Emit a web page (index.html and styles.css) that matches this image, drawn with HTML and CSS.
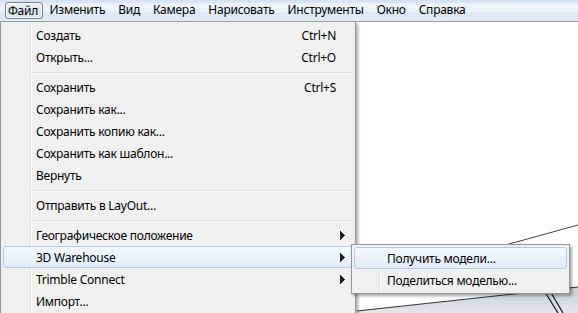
FILE: index.html
```html
<!DOCTYPE html>
<html lang="ru">
  <head>
    <meta charset="UTF-8" />
    <meta name="viewport" content="width=device-width, initial-scale=1.0" />
    <title>Файл</title>
    <link rel="stylesheet" href="styles.css">
  </head>
  <body>
    <div class="app">
      <!-- Menu bar -->
      <nav class="menubar">
        <span class="menubar-item active">Файл</span>
        <span class="menubar-item">Изменить</span>
        <span class="menubar-item">Вид</span>
        <span class="menubar-item">Камера</span>
        <span class="menubar-item">Нарисовать</span>
        <span class="menubar-item">Инструменты</span>
        <span class="menubar-item">Окно</span>
        <span class="menubar-item">Справка</span>
      </nav>

      <div class="viewport">
        <!-- Model canvas behind the menus -->
        <svg class="scene" width="578" height="291" viewBox="0 0 578 291">
          <defs>
            <linearGradient id="ground" x1="0" y1="0" x2="0" y2="1">
              <stop offset="0" stop-color="#c9cdd2" />
              <stop offset="1" stop-color="#e4e6e9" />
            </linearGradient>
          </defs>
          <polygon points="357,289 578,265 578,291 357,291" fill="url(#ground)" />
          <line x1="357" y1="289" x2="578" y2="265" stroke="#333" stroke-width="1" />
          <line x1="480" y1="230" x2="578" y2="203" stroke="#444" stroke-width="1" />
          <line x1="545" y1="270" x2="558" y2="291" stroke="#111" stroke-width="1.2" />
          <line x1="550" y1="269" x2="563" y2="291" stroke="#111" stroke-width="1.2" />
        </svg>

        <!-- File menu -->
        <div class="dropdown">
          <div class="item"><span class="label">Создать</span><span class="key">Ctrl+N</span><span class="arrow-cell"></span></div>
          <div class="item"><span class="label">Открыть...</span><span class="key">Ctrl+O</span><span class="arrow-cell"></span></div>
          <div class="separator"></div>
          <div class="item"><span class="label">Сохранить</span><span class="key">Ctrl+S</span><span class="arrow-cell"></span></div>
          <div class="item"><span class="label">Сохранить как...</span><span class="arrow-cell"></span></div>
          <div class="item"><span class="label">Сохранить копию как...</span><span class="arrow-cell"></span></div>
          <div class="item"><span class="label">Сохранить как шаблон...</span><span class="arrow-cell"></span></div>
          <div class="item"><span class="label">Вернуть</span><span class="arrow-cell"></span></div>
          <div class="separator"></div>
          <div class="item"><span class="label">Отправить в LayOut...</span><span class="arrow-cell"></span></div>
          <div class="separator"></div>
          <div class="item">
            <span class="label">Географическое положение</span>
            <span class="arrow-cell"><svg class="arrow" width="5" height="9" viewBox="0 0 5 9"><polygon points="0,0 5,4.5 0,9" /></svg></span>
          </div>
          <div class="item hover">
            <span class="label">3D Warehouse</span>
            <span class="arrow-cell"><svg class="arrow" width="5" height="9" viewBox="0 0 5 9"><polygon points="0,0 5,4.5 0,9" /></svg></span>
          </div>
          <div class="item">
            <span class="label">Trimble Connect</span>
            <span class="arrow-cell"><svg class="arrow" width="5" height="9" viewBox="0 0 5 9"><polygon points="0,0 5,4.5 0,9" /></svg></span>
          </div>
          <div class="item"><span class="label">Импорт...</span><span class="arrow-cell"></span></div>
        </div>

        <!-- 3D Warehouse submenu -->
        <div class="submenu">
          <div class="item hover"><span class="label">Получить модели...</span></div>
          <div class="item"><span class="label">Поделиться моделью...</span></div>
        </div>
      </div>
    </div>
  </body>
</html>
```

FILE: styles.css
```css
* {
  box-sizing: border-box;
  margin: 0;
  padding: 0;
}
body {
  width: 578px;
  height: 313px;
  overflow: hidden;
  background: #fff;
  font-family: "Noto Sans", "Liberation Sans", sans-serif;
  font-size: 12px;
  letter-spacing: -0.25px;
  color: #000;
}
.app {
  display: flex;
  flex-direction: column;
  height: 313px;
}
.menubar {
  display: flex;
  align-items: center;
  height: 22px;
  padding-left: 5px;
  background: linear-gradient(#d3dff0 0, #dfe8f4 3px, #eef3fa 4px, #eaf0f8 12px, #dee6f1 13px, #e4eaf3 20px);
  border-bottom: 1px solid #a0a0a0;
}
.menubar-item {
  height: 17px;
  line-height: 15px;
  padding: 0 6.5px;
  white-space: nowrap;
}
.menubar-item.active {
  padding: 0 4px 0 2px;
  border: 1px solid #7c7f84;
  border-radius: 3px;
  background: linear-gradient(#eceff3, #dde2e9);
  box-shadow: inset 0 0 0 1px rgba(255, 255, 255, 0.6);
}
.viewport {
  position: relative;
  flex: 1;
}
.scene {
  display: block;
}
.dropdown {
  position: absolute;
  left: 0;
  top: 0;
  width: 356px;
  padding: 2px;
  border: 1px solid #979797;
  border-top: none;
  background: linear-gradient(to right, #f0f0f0 29px, #e2e3e3 29px, #e2e3e3 30px, #fff 30px, #fff 31px, #f0f0f0 31px);
  box-shadow: 2px 2px 3px rgba(0, 0, 0, 0.35);
}
.item {
  display: flex;
  align-items: center;
  height: 22px;
  padding-left: 32px;
  border: 1px solid transparent;
  border-radius: 3px;
  white-space: nowrap;
}
.item.hover {
  border-color: #aecbf0;
  background: linear-gradient(#f4f7fc, #e3ebf7);
}
.label {
  flex: 1;
}
.key {
  text-align: right;
}
.arrow-cell {
  display: flex;
  align-items: center;
  width: 16px;
  padding-left: 4px;
}
.arrow {
  display: block;
  fill: #1e1e1e;
  shape-rendering: crispEdges;
}
.separator {
  height: 8px;
  margin-left: 28px;
  padding-top: 4px;
}
.separator::before {
  content: "";
  display: block;
  border-top: 1px solid #dcdcdc;
  border-bottom: 1px solid #fff;
}
.submenu {
  position: absolute;
  left: 351px;
  top: 222px;
  width: 219px;
  padding: 2px;
  border: 1px solid #979797;
  background: linear-gradient(to right, #f0f0f0 27px, #e2e3e3 27px, #e2e3e3 28px, #fff 28px, #fff 29px, #f0f0f0 29px);
  box-shadow: 2px 2px 3px rgba(0, 0, 0, 0.35);
}
```
